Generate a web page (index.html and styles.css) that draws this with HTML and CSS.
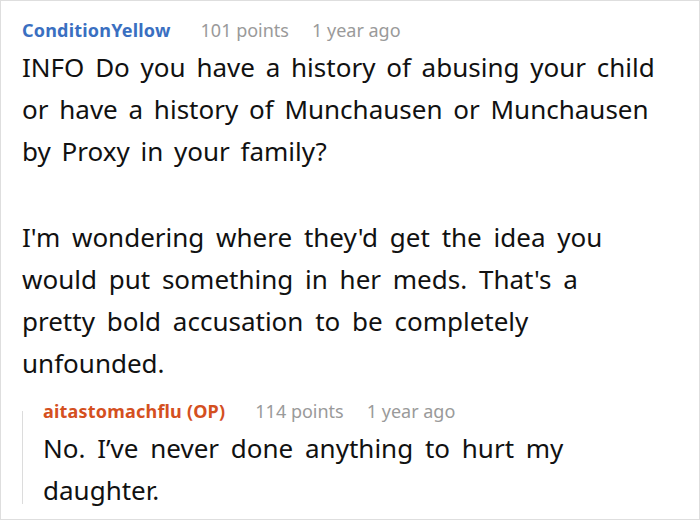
FILE: index.html
```html
<!DOCTYPE html>
<html lang="en">
<head>
<meta charset="utf-8">
<title>Comments</title>
<link rel="stylesheet" href="styles.css">
</head>
<body>
<div class="frame">
  <div class="comment">
    <div class="meta">
      <span class="author author-blue">ConditionYellow</span>
      <span class="info">101 points</span>
      <span class="info">1 year ago</span>
    </div>
    <div class="body">
      <p class="tight">INFO Do you have a history of abusing your child or have a history of Munchausen or Munchausen by Proxy in your family?</p>
      <p class="gap">I'm wondering where they'd get the idea you would put something in her meds. That's a pretty bold accusation to be completely unfounded.</p>
    </div>
  </div>
  <div class="reply">
    <div class="thread-line"></div>
    <div class="reply-content">
      <div class="meta">
        <span class="author author-orange">aitastomachflu (OP)</span>
        <span class="info">114 points</span>
        <span class="info">1 year ago</span>
      </div>
      <div class="body">
        <p>No. I’ve never done anything to hurt my daughter.</p>
      </div>
    </div>
  </div>
</div>
</body>
</html>
```
FILE: styles.css
```css
html, body {
  margin: 0;
  padding: 0;
  background: #fff;
}

body {
  font-family: "Noto Sans", "Open Sans", sans-serif;
  color: #111;
}

.frame {
  box-sizing: border-box;
  width: 700px;
  height: 520px;
  border: 1px solid #dedede;
  padding: 17px 37px 0 21px;
  overflow: hidden;
}

.meta {
  display: flex;
  font-size: 18px;
  line-height: 24px;
  height: 24px;
  margin-bottom: 4px;
  white-space: nowrap;
}

.author {
  font-weight: 700;
  letter-spacing: 0.2px;
  margin-right: 30px;
}

.author-blue {
  color: #3a6fc1;
}

.author-orange {
  color: #d4501f;
}

.info {
  color: #9a9a9a;
  margin-right: 23px;
}

.body {
  font-size: 26px;
  line-height: 42px;
  word-spacing: 5px;
}

.body p {
  margin: 0;
}

.body p.tight {
  word-spacing: 4px;
}

.body p.gap {
  margin-top: 44px;
}

.reply {
  display: flex;
  margin-top: 15px;
}

.thread-line {
  width: 1px;
  background: #dcdcdc;
  margin: 12px 20px 7px 0;
  flex: none;
}

.reply-content {
  flex: 1;
}
```
